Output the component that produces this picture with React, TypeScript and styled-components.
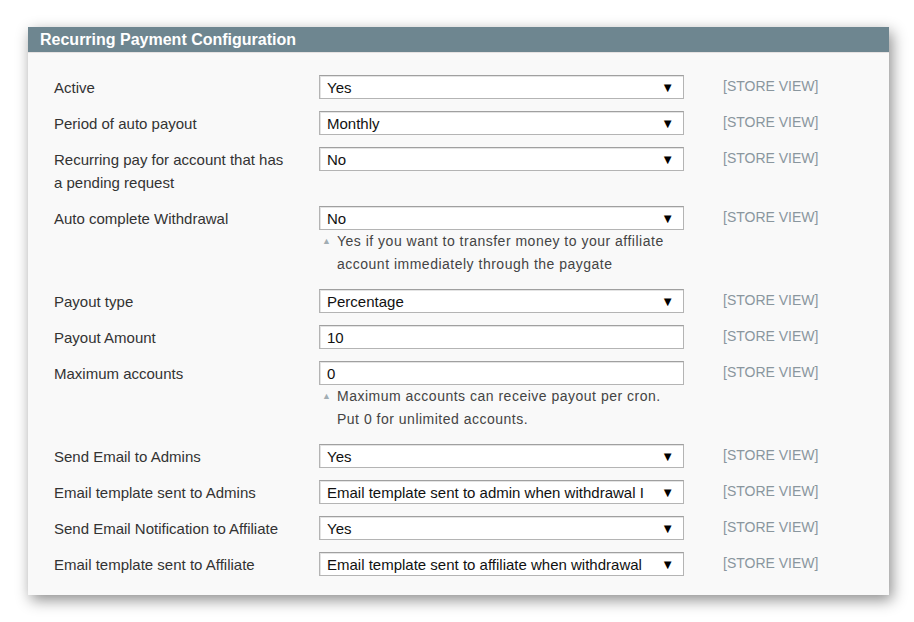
import React from "react";
import styled, { createGlobalStyle } from "styled-components";

const Global = createGlobalStyle`
  html, body { margin: 0; padding: 0; background: #ffffff; }
  body { font-family: "Liberation Sans", Arial, sans-serif; }
`;

const Page = styled.div`
  width: 914px;
  height: 622px;
  padding: 27px 0 0 28px;
  box-sizing: border-box;
`;

const Panel = styled.section`
  width: 861px;
  height: 568px;
  background: #f9f9f9;
  box-shadow: 3px 5px 14px rgba(0, 0, 0, 0.45);
  display: flex;
  flex-direction: column;
`;

const Header = styled.h2`
  margin: 0;
  height: 25px;
  line-height: 25px;
  padding-left: 12px;
  background: #6e8690;
  border-bottom: 1px solid #e6e2e2;
  color: #ffffff;
  font-size: 16px;
  font-weight: bold;
`;

const Body = styled.div`
  padding: 16px 0 0 26px;
  display: flex;
  flex-direction: column;
`;

const Row = styled.div`
  display: grid;
  grid-template-columns: 265px 365px auto;
  padding: 6px 0;
`;

const Label = styled.div`
  color: #333333;
  font-size: 15px;
  line-height: 23px;
  padding-top: 1px;
  width: 240px;
`;

const Field = styled.div`
  display: flex;
  flex-direction: column;
`;

const Box = styled.div`
  height: 24px;
  box-sizing: border-box;
  background: #ffffff;
  border: 1px solid #b4b4b4;
  border-top-color: #a0a0a0;
  box-shadow: inset 1px 1px 0 #e4e4e4;
  display: flex;
  align-items: center;
  padding: 0 9px 0 7px;
  font-size: 15px;
  color: #111111;
`;

const BoxText = styled.span`
  flex: 1;
  min-width: 0;
  white-space: nowrap;
  overflow: hidden;
`;

const Arrow = styled.span`
  font-size: 13px;
  line-height: 1;
  color: #000;
  margin-left: 10px;
`;

const Note = styled.div`
  position: relative;
  padding: 0 0 1px 18px;
  font-size: 14px;
  letter-spacing: 0.5px;
  line-height: 23px;
  color: #444444;
  white-space: nowrap;
`;

const NoteMark = styled.span`
  position: absolute;
  left: 3px;
  top: 0;
  font-size: 9px;
  color: #a2adb3;
`;

const Scope = styled.div`
  margin-left: 39px;
  color: #8a969e;
  font-size: 14px;
  line-height: 23px;
  white-space: nowrap;
`;

type RowData = {
  label: string;
  value: string;
  kind: "select" | "input";
  note?: string[];
};

const rows: RowData[] = [
  { label: "Active", value: "Yes", kind: "select" },
  { label: "Period of auto payout", value: "Monthly", kind: "select" },
  { label: "Recurring pay for account that has a pending request", value: "No", kind: "select" },
  {
    label: "Auto complete Withdrawal",
    value: "No",
    kind: "select",
    note: ["Yes if you want to transfer money to your affiliate", "account immediately through the paygate"],
  },
  { label: "Payout type", value: "Percentage", kind: "select" },
  { label: "Payout Amount", value: "10", kind: "input" },
  {
    label: "Maximum accounts",
    value: "0",
    kind: "input",
    note: ["Maximum accounts can receive payout per cron.", "Put 0 for unlimited accounts."],
  },
  { label: "Send Email to Admins", value: "Yes", kind: "select" },
  { label: "Email template sent to Admins", value: "Email template sent to admin when withdrawal I", kind: "select" },
  { label: "Send Email Notification to Affiliate", value: "Yes", kind: "select" },
  { label: "Email template sent to Affiliate", value: "Email template sent to affiliate when withdrawal", kind: "select" },
];

export default function App() {
  return (
    <Page>
      <Global />
      <Panel>
        <Header>Recurring Payment Configuration</Header>
        <Body>
          {rows.map((r) => (
            <Row key={r.label}>
              <Label>{r.label}</Label>
              <Field>
                <Box>
                  <BoxText>{r.value}</BoxText>
                  {r.kind === "select" && <Arrow>▼</Arrow>}
                </Box>
                {r.note && (
                  <Note>
                    <NoteMark>▲</NoteMark>
                    {r.note.map((n) => (
                      <div key={n}>{n}</div>
                    ))}
                  </Note>
                )}
              </Field>
              <Scope>[STORE VIEW]</Scope>
            </Row>
          ))}
        </Body>
      </Panel>
    </Page>
  );
}
